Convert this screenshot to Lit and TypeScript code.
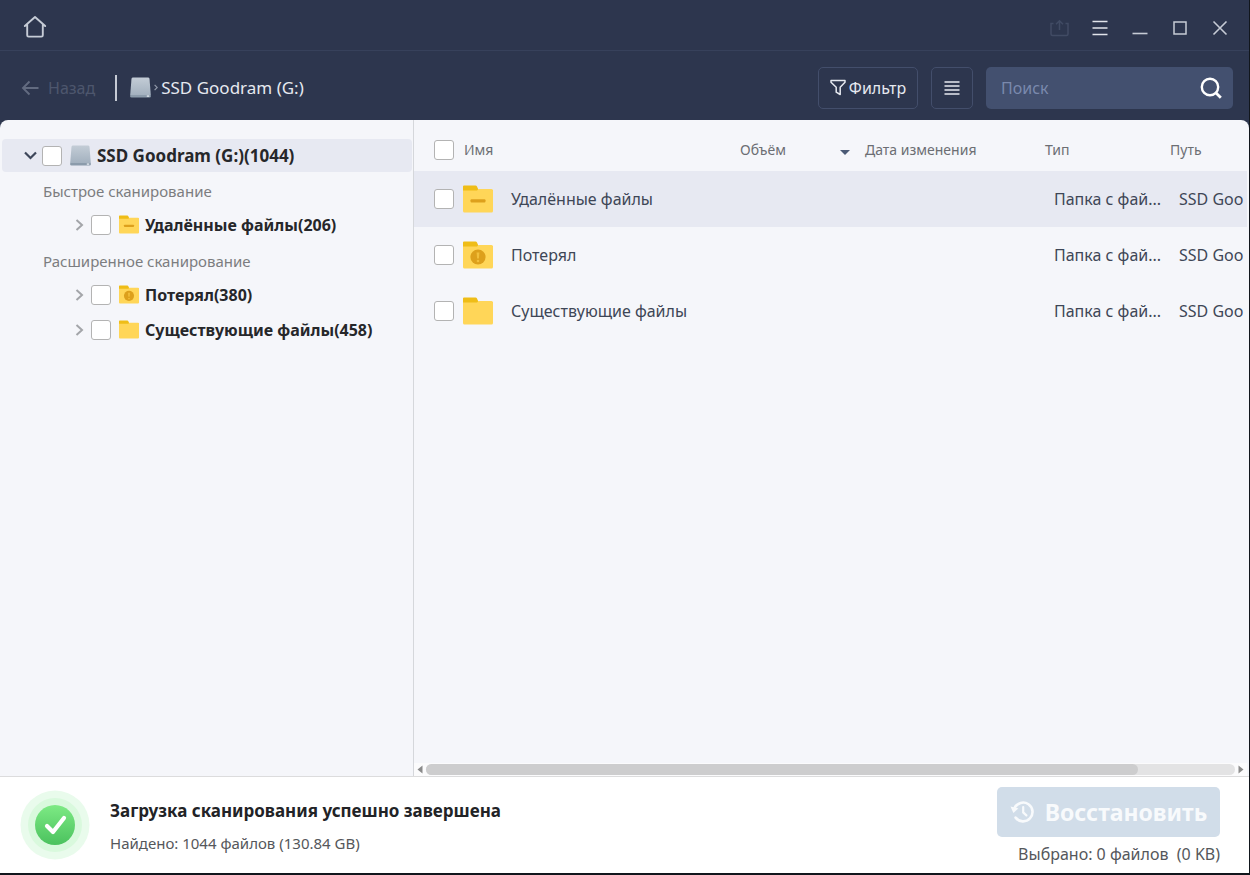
import { LitElement, html, css, svg, nothing } from "lit";
import { customElement, property, query } from "lit/decorators.js";
import { classMap } from "lit/directives/class-map.js";

type FolderKind = "deleted" | "lost" | "existing";

interface Folder {
  kind: FolderKind;
  name: string;
  count: number;
}

const quick: Folder[] = [{ kind: "deleted", name: "Удалённые файлы", count: 206 }];
const advanced: Folder[] = [
  { kind: "lost", name: "Потерял", count: 380 },
  { kind: "existing", name: "Существующие файлы", count: 458 },
];

@customElement("folder-icon")
export class FolderIcon extends LitElement {
  @property() kind: FolderKind = "existing";

  static styles = css`
    :host {
      display: block;
      flex: none;
      width: 30px;
      height: 28px;
    }
    svg {
      display: block;
      width: 100%;
      height: 100%;
    }
  `;

  render() {
    return html`<svg viewBox="0 0 30 28" aria-hidden="true">
      <path d="M0 1.5Q0 0.5 1 0.5H12.5Q13.5 0.5 14 1.5L15.5 5H30V10H0Z" fill="#efbd17" />
      <path d="M0 5.5H14L15.5 4H28.5Q30 4 30 5.5V26Q30 27.5 28.5 27.5H1.5Q0 27.5 0 26Z" fill="#ffd658" />
      ${this.kind === "deleted"
        ? svg`<rect x="7.5" y="14.2" width="15" height="3.4" rx="1" fill="#dda01c" />`
        : nothing}
      ${this.kind === "lost"
        ? svg`<circle cx="15" cy="16" r="7.6" fill="#dda01c" />
            <path d="M13.6 11.4H16.4L15.9 17.4H14.1Z" fill="#f2bf3c" />
            <circle cx="15" cy="20" r="1.3" fill="#f2bf3c" />`
        : nothing}
    </svg>`;
  }
}

@customElement("drive-icon")
export class DriveIcon extends LitElement {
  static styles = css`
    :host {
      display: block;
      flex: none;
      width: 21px;
      height: 21px;
    }
    svg {
      display: block;
      width: 100%;
      height: 100%;
    }
  `;

  render() {
    return html`<svg viewBox="0 0 21 21" aria-hidden="true">
      <defs>
        <linearGradient id="g" x1="0" y1="0" x2="0" y2="1">
          <stop offset="0" stop-color="#c3ccd6" />
          <stop offset="1" stop-color="#a3b1bf" />
        </linearGradient>
      </defs>
      <path d="M3 0.5H18Q19.3 0.5 19.5 1.8L20.8 18H0.2L1.5 1.8Q1.7 0.5 3 0.5Z" fill="url(#g)" />
      <path d="M0.2 18H20.8V19.3Q20.8 20.6 19.5 20.6H1.5Q0.2 20.6 0.2 19.3Z" fill="#8b9bab" />
      <rect x="16.8" y="18.4" width="2.4" height="1.4" fill="#dfe6ec" />
    </svg>`;
  }
}

@customElement("app-root")
export class AppRoot extends LitElement {
  @query(".list-view") private listView!: HTMLElement;

  static styles = css`
    :host {
      display: flex;
      flex-direction: column;
      box-sizing: border-box;
      height: 100vh;
      padding: 0 1px 2px 0;
      background: #11161c;
      color: #3e4656;
      font: 16px/24px "Noto Sans", "Open Sans", sans-serif;
    }
    * {
      box-sizing: border-box;
    }
    button {
      display: flex;
      align-items: center;
      justify-content: center;
      margin: 0;
      padding: 0;
      border: 0;
      background: none;
      color: inherit;
      font: inherit;
    }
    svg {
      display: block;
      flex: none;
    }
    input[type="checkbox"] {
      appearance: none;
      flex: none;
      width: 20px;
      height: 20px;
      margin: 0;
      border: 1px solid #b3b3b3;
      border-radius: 3px;
      background: #fff;
    }
    input[type="checkbox"]:checked {
      background: #4a90e2;
    }
    .head {
      background: #2d364e;
      color: #e6e9f0;
    }
    .titlebar {
      display: flex;
      align-items: center;
      justify-content: space-between;
      height: 51px;
      padding: 4px 9px 0 15px;
      border-bottom: 1px solid #37415b;
    }
    .titlebar button {
      width: 40px;
      height: 40px;
    }
    .window-buttons {
      display: flex;
      padding-top: 1px;
    }
    .toolbar {
      display: flex;
      align-items: center;
      gap: 13px;
      height: 69px;
      padding: 4px 16px 0 21px;
    }
    .back {
      gap: 9px;
      color: #4d566d;
    }
    .divider {
      width: 2px;
      height: 26px;
      margin-left: 7px;
      background: #c5cad4;
    }
    .crumbs {
      display: flex;
      flex: 1;
      align-items: center;
      gap: 3px;
    }
    .crumbs a {
      color: #e6e9f0;
      font-size: 17px;
      text-decoration: none;
      white-space: nowrap;
    }
    .outlined {
      height: 42px;
      border: 1px solid #434e6b;
      border-radius: 5px;
    }
    .filter {
      gap: 3px;
      width: 100px;
    }
    .layout {
      width: 42px;
    }
    .search {
      display: flex;
      align-items: center;
      width: 247px;
      height: 42px;
      padding: 0 11px 0 15px;
      border-radius: 5px;
      background: #43506f;
    }
    .search input {
      flex: 1;
      min-width: 0;
      padding: 0;
      border: 0;
      outline: 0;
      background: none;
      color: #fff;
      font: inherit;
    }
    .search input::placeholder {
      color: #7a89ad;
      opacity: 1;
    }
    .backdrop {
      display: flex;
      flex: 1;
      min-height: 0;
      background: #2d364e;
    }
    .panel {
      display: grid;
      flex: 1;
      grid-template-columns: 414px minmax(0, 1fr);
      overflow: hidden;
      border-radius: 8px 8px 0 0;
      background: #f5f6fa;
    }
    .tree {
      padding-top: 19px;
      border-right: 1px solid #d5d7db;
      color: #26272a;
      font-weight: 700;
    }
    .tree ul {
      margin: 0;
      padding: 0;
      list-style: none;
    }
    .node {
      display: flex;
      align-items: center;
      height: 35px;
      padding-left: 73px;
      white-space: nowrap;
    }
    .node button {
      width: 13px;
      height: 20px;
      margin-right: 5px;
    }
    .node label {
      margin-left: 6px;
    }
    .node folder-icon {
      width: 20px;
      height: 19px;
      margin-left: 8px;
    }
    .root {
      height: 33px;
      margin: 0 1px 0 2px;
      padding-left: 22px;
      border-radius: 4px;
      background: #e7e9f2;
      font-size: 17px;
    }
    .root drive-icon {
      margin-left: 8px;
    }
    .scan {
      height: 35px;
      margin: 0;
      padding-left: 43px;
      color: #7c7d80;
      font-size: 15px;
      font-weight: 400;
      line-height: 39px;
    }
    .files {
      display: flex;
      flex-direction: column;
      min-width: 0;
      padding-right: 2px;
    }
    .list-view {
      flex: 1;
      overflow: hidden;
    }
    table {
      width: 114%;
      border-collapse: collapse;
      table-layout: fixed;
    }
    th,
    td {
      padding: 0;
      white-space: nowrap;
      text-align: left;
    }
    th {
      height: 51px;
      padding: 8px 0 0 10px;
      color: #6c6e73;
      font-size: 14px;
      font-weight: 400;
    }
    th:first-child,
    td:first-child {
      padding-left: 20px;
    }
    td {
      height: 56px;
      padding-left: 19px;
    }
    .active {
      background: #e7e9f2;
    }
    .c-name {
      width: 316px;
    }
    .c-size,
    .c-type {
      width: 125px;
    }
    .c-date {
      width: 180px;
    }
    .cell {
      display: flex;
      align-items: center;
    }
    .cell label {
      margin-left: 10px;
    }
    .cell folder-icon {
      margin-left: 9px;
    }
    .cell folder-icon + label {
      margin-left: 18px;
    }
    .sorted {
      justify-content: space-between;
    }
    .scrollbar {
      display: flex;
      align-items: center;
      height: 13px;
      background: #fbfbfc;
    }
    .scrollbar button {
      width: 12px;
      height: 11px;
    }
    .track {
      flex: 1;
      height: 11px;
      border-radius: 6px;
      background: #e3e3e4;
    }
    .thumb {
      width: 88%;
      height: 11px;
      border-radius: 6px;
      background: #cdcdce;
    }
    .status {
      display: flex;
      align-items: center;
      height: 97px;
      padding: 0 29px 0 20px;
      border-top: 1px solid #dcdcdd;
      background: #fff;
      color: #222326;
    }
    .summary {
      flex: 1;
      padding: 3px 0 0 20px;
    }
    .summary h1 {
      margin: 0 0 8px;
      font-size: 17px;
      font-weight: 700;
      line-height: 24px;
    }
    .summary p,
    .chosen p {
      margin: 0;
      color: #55575b;
      font-size: 15px;
      line-height: 24px;
    }
    .chosen {
      display: flex;
      flex-direction: column;
      align-items: flex-end;
      gap: 5px;
      padding-top: 2px;
    }
    .chosen p {
      font-size: 16px;
      white-space: pre;
    }
    .recover {
      gap: 10px;
      width: 223px;
      height: 50px;
      border-radius: 5px;
      background: #d1dde9;
      color: #f8fafc;
      font-size: 23px;
      font-weight: 700;
    }
  `;

  private scroll(step: number) {
    this.listView.scrollBy({ left: step, behavior: "smooth" });
  }

  private node(f: Folder) {
    return html`<li class="node">
      <button aria-label="Развернуть">
        <svg width="9" height="14" fill="none" stroke="#a3a5a9" stroke-width="2">
          <path d="M1.5 2L7 7L1.5 12" />
        </svg>
      </button>
      <input type="checkbox" id="tree-${f.kind}" />
      <folder-icon kind=${f.kind}></folder-icon>
      <label for="tree-${f.kind}">${f.name}(${f.count})</label>
    </li>`;
  }

  private row(f: Folder, active: boolean) {
    return html`<tr class=${classMap({ active })}>
      <td>
        <div class="cell">
          <input type="checkbox" id="row-${f.kind}" />
          <folder-icon kind=${f.kind}></folder-icon>
          <label for="row-${f.kind}">${f.name}</label>
        </div>
      </td>
      <td></td>
      <td></td>
      <td>Папка с фай...</td>
      <td>SSD Goo</td>
    </tr>`;
  }

  render() {
    return html`
      <header class="head">
        <div class="titlebar">
          <button aria-label="Домой">
            <svg width="24" height="24" fill="none" stroke="#c6ccd6" stroke-width="1.9" stroke-linejoin="round" stroke-linecap="round">
              <path d="M1.8 11L12 2L22.2 11M4.2 9.2V20.2Q4.2 21.6 5.6 21.6H18.4Q19.8 21.6 19.8 20.2V9.2" />
            </svg>
          </button>
          <div class="window-buttons">
            <button aria-label="Экспорт" disabled>
              <svg width="20" height="18" fill="none" stroke="#414b64" stroke-width="1.5">
                <path d="M3.5 4.5H1V15Q1 16.5 2.5 16.5H16.5Q18 16.5 18 15V4.5H15.5M9.5 11V2M6 5.2L9.5 1.7L13 5.2" />
              </svg>
            </button>
            <button aria-label="Меню">
              <svg width="16" height="16" stroke="#e1e4ea" stroke-width="1.6">
                <path d="M0.5 1.5H15.5M0.5 8H15.5M0.5 14.5H15.5" />
              </svg>
            </button>
            <button aria-label="Свернуть">
              <svg width="16" height="16" stroke="#c6cbd5" stroke-width="1.6">
                <path d="M0.5 13.5H15.5" />
              </svg>
            </button>
            <button aria-label="Развернуть окно">
              <svg width="16" height="16" fill="none" stroke="#c6cbd5" stroke-width="1.5">
                <path d="M2 2H14V14H2Z" />
              </svg>
            </button>
            <button aria-label="Закрыть">
              <svg width="16" height="16" stroke="#c6cbd5" stroke-width="1.6">
                <path d="M1.5 1.5L14.5 14.5M14.5 1.5L1.5 14.5" />
              </svg>
            </button>
          </div>
        </div>
        <div class="toolbar">
          <button class="back" disabled>
            <svg width="18" height="16" fill="none" stroke="#626b80" stroke-width="1.9">
              <path d="M17.5 8H2M8.5 1.5L2 8L8.5 14.5" />
            </svg>
            Назад
          </button>
          <span class="divider"></span>
          <nav class="crumbs">
            <drive-icon></drive-icon>
            <svg width="4" height="7" fill="none" stroke="#8f97a8" stroke-width="1.2">
              <path d="M0.6 0.8L3.2 3.5L0.6 6.2" />
            </svg>
            <a href="#">SSD Goodram (G:)</a>
          </nav>
          <button class="outlined filter">
            <svg width="16" height="17" fill="none" stroke="#e6e9f0" stroke-width="1.5" stroke-linejoin="round">
              <path d="M1 1.5H15V3.2L10.2 8.2V15.5L6.2 13.2V8.2L1 3.2Z" />
            </svg>
            Фильтр
          </button>
          <button class="outlined layout" aria-label="Вид">
            <svg width="16" height="14" stroke="#e6e9f0" stroke-width="1.4">
              <path d="M0.5 1H15.5M0.5 5H15.5M0.5 9H15.5M0.5 13H15.5" />
            </svg>
          </button>
          <div class="search">
            <input type="search" placeholder="Поиск" aria-label="Поиск" />
            <button aria-label="Найти">
              <svg width="22" height="22" fill="none" stroke="#ffffff" stroke-width="2.4">
                <circle cx="10" cy="10" r="8.2" />
                <path d="M15.8 15.8L20.8 20.8" stroke-width="2.8" />
              </svg>
            </button>
          </div>
        </div>
      </header>

      <div class="backdrop">
        <main class="panel">
          <aside class="tree">
            <div class="node root">
              <button aria-label="Свернуть">
                <svg width="13" height="9" fill="none" stroke="#3e475a" stroke-width="2.2">
                  <path d="M1 1.5L6.5 7L12 1.5" />
                </svg>
              </button>
              <input type="checkbox" id="tree-root" />
              <drive-icon></drive-icon>
              <label for="tree-root">SSD Goodram (G:)(1044)</label>
            </div>
            <p class="scan">Быстрое сканирование</p>
            <ul>
              ${quick.map((f) => this.node(f))}
            </ul>
            <p class="scan">Расширенное сканирование</p>
            <ul>
              ${advanced.map((f) => this.node(f))}
            </ul>
          </aside>

          <section class="files">
            <div class="list-view">
              <table>
                <colgroup>
                  <col class="c-name" />
                  <col class="c-size" />
                  <col class="c-date" />
                  <col class="c-type" />
                  <col />
                </colgroup>
                <thead>
                  <tr>
                    <th>
                      <div class="cell">
                        <input type="checkbox" id="all" />
                        <label for="all">Имя</label>
                      </div>
                    </th>
                    <th>
                      <div class="cell sorted">
                        Объём
                        <svg width="20" height="12"><path d="M5 6H15L10 11Z" fill="#4b5a75" /></svg>
                      </div>
                    </th>
                    <th>Дата изменения</th>
                    <th>Тип</th>
                    <th>Путь</th>
                  </tr>
                </thead>
                <tbody>
                  ${[...quick, ...advanced].map((f, i) => this.row(f, i === 0))}
                </tbody>
              </table>
            </div>
            <div class="scrollbar">
              <button aria-label="Влево" @click=${() => this.scroll(-60)}>
                <svg width="6" height="9"><path d="M5.5 0.5V8.5L0.5 4.5Z" fill="#8a8a8a" /></svg>
              </button>
              <div class="track"><div class="thumb"></div></div>
              <button aria-label="Вправо" @click=${() => this.scroll(60)}>
                <svg width="6" height="9"><path d="M0.5 0.5V8.5L5.5 4.5Z" fill="#8a8a8a" /></svg>
              </button>
            </div>
          </section>
        </main>
      </div>

      <footer class="status">
        <svg width="70" height="70" viewBox="0 0 70 70" aria-hidden="true">
          <defs>
            <linearGradient id="ok" x1="0" y1="0" x2="0" y2="1">
              <stop offset="0" stop-color="#7dea84" />
              <stop offset="1" stop-color="#4bc25e" />
            </linearGradient>
          </defs>
          <circle cx="35" cy="35" r="34.5" fill="#e9fbec" />
          <circle cx="35" cy="35" r="27" fill="#d9f9dd" />
          <circle cx="35" cy="35" r="20" fill="url(#ok)" />
          <path d="M27 36L33 42L44 28" fill="none" stroke="#fff" stroke-width="4.2" stroke-linecap="round" stroke-linejoin="round" />
        </svg>
        <div class="summary">
          <h1>Загрузка сканирования успешно завершена</h1>
          <p>Найдено: 1044 файлов (130.84 GB)</p>
        </div>
        <div class="chosen">
          <button class="recover" disabled>
            <svg width="25" height="24" fill="none" stroke="#f8fafc" stroke-width="2.6" stroke-linecap="round">
              <path d="M4.6 8A9.4 9.4 0 1 1 5.6 17.6" />
              <path d="M0.5 6.6L8.4 8.4L3.4 13Z" fill="#f8fafc" stroke="none" />
              <path d="M13.2 7V12.4L16.4 15.4" stroke-width="2.2" />
            </svg>
            Восстановить
          </button>
          <p>Выбрано: 0 файлов  (0 KB)</p>
        </div>
      </footer>
    `;
  }
}
